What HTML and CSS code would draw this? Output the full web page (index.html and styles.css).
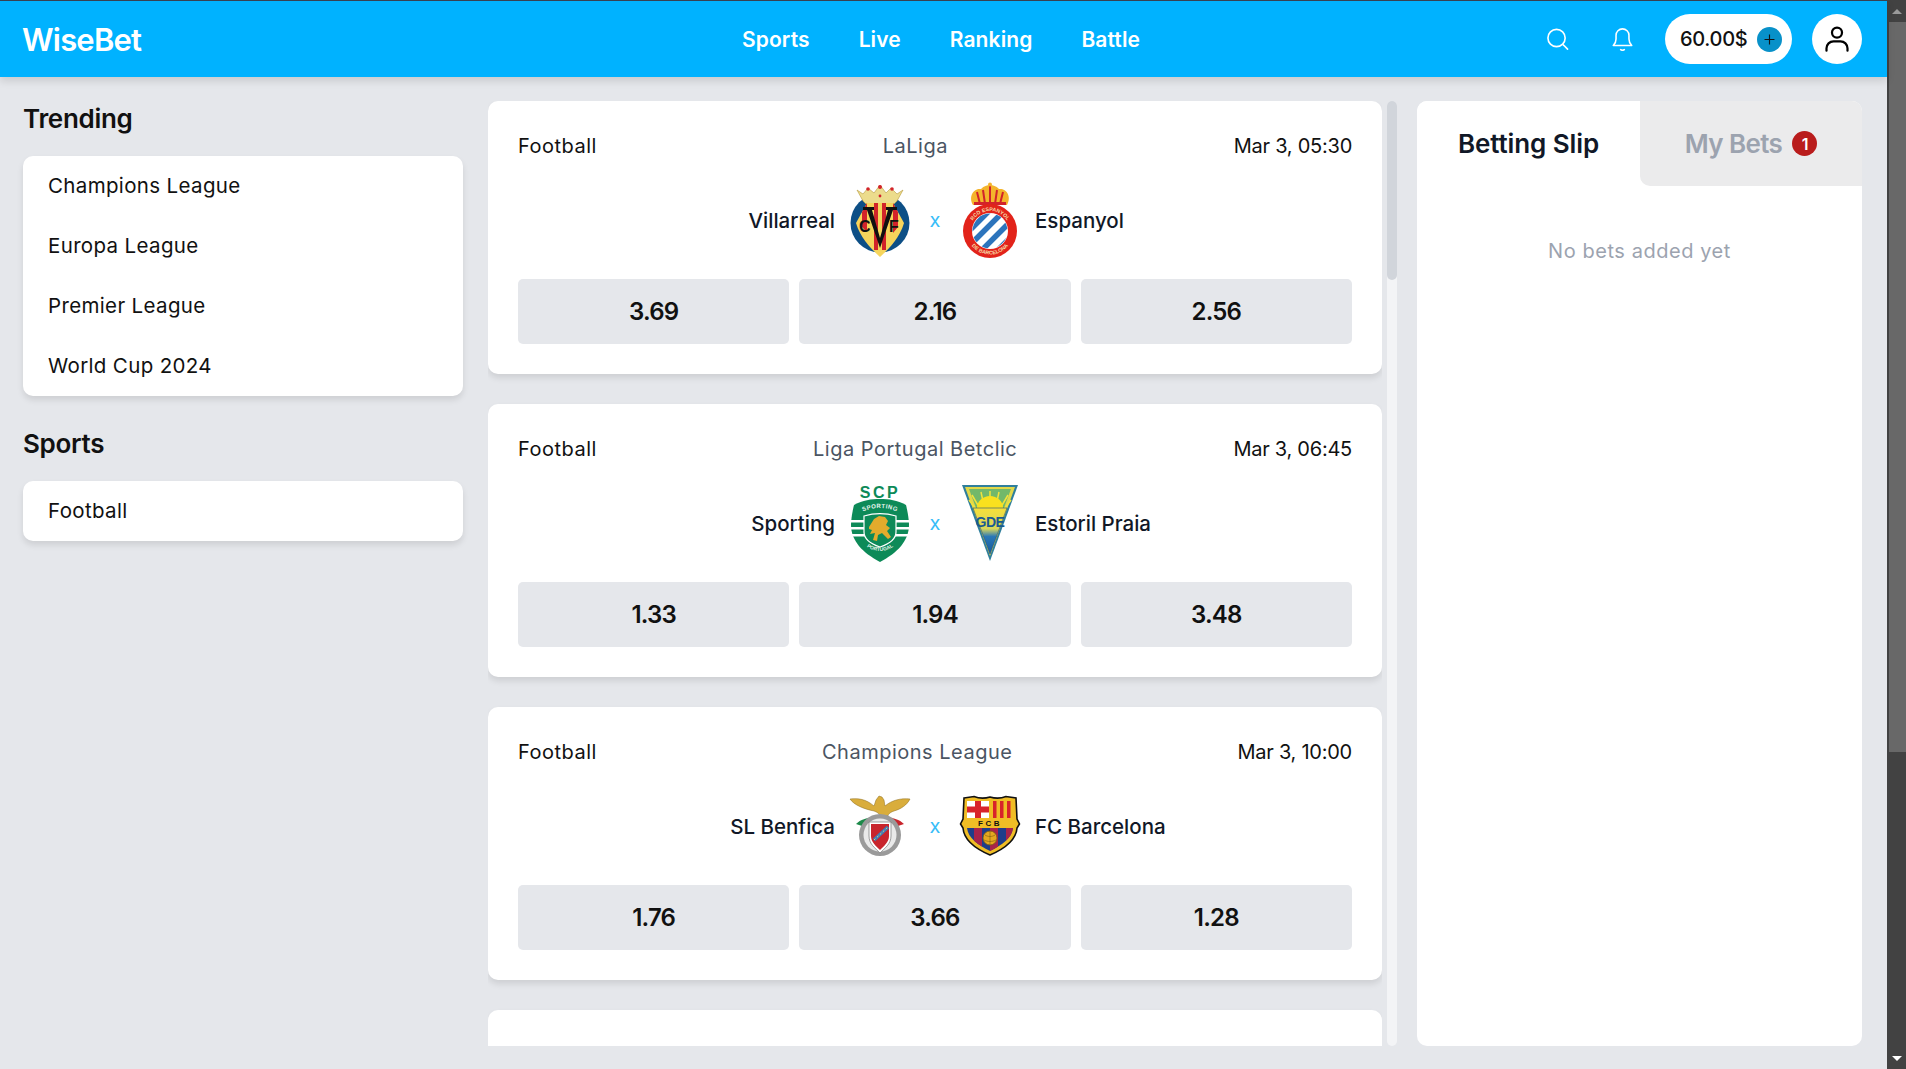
FILE: index.html
```html
<!DOCTYPE html>
<html lang="en">
<head>
    <meta charset="UTF-8">
    <meta name="viewport" content="width=device-width, initial-scale=1.0">
    <title>WiseBet</title>
    <link rel="stylesheet" href="styles.css">
</head>
<body>
    <div class="page">
        <header class="topbar">
            <div class="logo">WiseBet</div>
            <nav class="nav">
                <a href="#">Sports</a>
                <a href="#">Live</a>
                <a href="#">Ranking</a>
                <a href="#">Battle</a>
            </nav>
            <div class="actions">
                <svg class="icon search-icon" viewBox="0 0 24 24" fill="none" stroke="#fff" stroke-width="1.7" stroke-linecap="round"><circle cx="11" cy="11" r="9"/><path d="M18 18l4.500 4.500"/></svg>
                <svg class="icon bell-icon" viewBox="0 0 24 26" fill="none" stroke="#fff" stroke-width="1.7" stroke-linecap="round" stroke-linejoin="round"><path d="M2 20c2-2 3-4 3-7V9a7 7 0 0 1 14 0v4c0 3 1 5 3 7z"/><path d="M10 24.500c1 .7 3 .7 4 0"/></svg>
                <div class="balance">
                    <span>60.00$</span>
                    <span class="plus"><svg viewBox="0 0 24 24" fill="none" stroke="#111" stroke-width="1.600"><path d="M12 5v14M5 12h14"/></svg></span>
                </div>
                <div class="avatar">
                    <svg viewBox="0 0 24 24" fill="none" stroke="#000" stroke-width="1.900" stroke-linecap="round"><circle cx="12" cy="6.500" r="4.300"/><path d="M3 22v-2a6 6 0 0 1 6-6h6a6 6 0 0 1 6 6v2"/></svg>
                </div>
            </div>
        </header>

        <div class="content">
            <aside class="sidebar">
                <h2>Trending</h2>
                <ul class="menu">
                    <li>Champions League</li>
                    <li>Europa League</li>
                    <li>Premier League</li>
                    <li>World Cup 2024</li>
                </ul>
                <h2>Sports</h2>
                <ul class="menu">
                    <li>Football</li>
                </ul>
            </aside>

            <main class="matches">
                <div class="match-list">
                    <section class="match">
                        <div class="match-head">
                            <span>Football</span>
                            <span class="league">LaLiga</span>
                            <span class="date">Mar 3, 05:30</span>
                        </div>
                        <div class="teams">
                            <div class="team home">
                                <span>Villarreal</span>
                                <svg class="crest" viewBox="0 0 60 76">
                                    <circle cx="30" cy="41" r="29.500" fill="#0d4f86"/>
                                    <path d="M7 8l6 4 5-6 6 5 6-8 6 8 5-5 6 6 6-4-6 11-3 3H16l-3-3z" fill="#ecdc8c" stroke="#b79a3d" stroke-width=".6"/>
                                    <circle cx="18" cy="7" r="1.800" fill="#d2232a"/><circle cx="30" cy="5" r="2" fill="#d2232a"/><circle cx="42" cy="7" r="1.800" fill="#d2232a"/><circle cx="30" cy="14" r="1.400" fill="#d2232a"/>
                                    <clipPath id="vil-clip"><path d="M17 21h26l11 20c-4 14-14 25-24 34C20 66 10 55 6 41z"/></clipPath>
                                    <path d="M17 21h26l11 20c-4 14-14 25-24 34C20 66 10 55 6 41z" fill="#f6d55c"/>
                                    <g clip-path="url(#vil-clip)" fill="#d2232a">
                                        <path d="M12 20h5v30l-5-5zM24 20h4v48h-4zM32 20h4v48h-4zM43 20h5v25l-5 6z"/>
                                    </g>
                                    <path d="M13 25h11v3h-2l8 28 8-28h-2v-3h11v3h-4L30 66 17 28h-4z" fill="#111"/>
                                    <text x="9" y="50" class="crest-text" font-size="16" fill="#111">C</text>
                                    <text x="39" y="50" class="crest-text" font-size="16" fill="#111">F</text>
                                </svg>
                            </div>
                            <div class="versus">x</div>
                            <div class="team">
                                <svg class="crest" viewBox="0 0 60 76">
                                    <path d="M13 23C8 14 14 6 21 7c3-3 6-4 9-4s6 1 9 4c7-1 13 7 8 16z" fill="#f4b42c"/>
                                    <path d="M20 22l-3-12M30 22V4M40 22l3-12M25 22l-2-14M35 22l2-14" stroke="#d2232a" stroke-width="2"/>
                                    <circle cx="30" cy="2.500" r="2" fill="#f4b42c"/>
                                    <rect x="14" y="20" width="32" height="3" fill="#d2232a"/>
                                    <circle cx="30" cy="49" r="27" fill="#e2231a"/>
                                    <path id="esp-top" d="M10 49a20 20 0 0 1 40 0" fill="none"/>
                                    <path id="esp-bottom" d="M6.500 49a23.500 23.500 0 0 0 47 0" fill="none"/>
                                    <text class="crest-text" font-size="5.200" fill="#f8dca8"><textPath href="#esp-top" startOffset="50%" text-anchor="middle">RCD ESPANYOL</textPath></text>
                                    <text class="crest-text" font-size="5.200" fill="#f8dca8"><textPath href="#esp-bottom" startOffset="50%" text-anchor="middle">DE BARCELONA</textPath></text>
                                    <circle cx="30" cy="49" r="18" fill="#fff"/>
                                    <clipPath id="esp-clip"><circle cx="30" cy="49" r="17.500"/></clipPath>
                                    <g clip-path="url(#esp-clip)" stroke="#2c74bc" stroke-width="5.500">
                                        <path d="M2 56l28-28M9 64l35-35M18 72l35-35M30 76l30-30"/>
                                    </g>
                                </svg>
                                <span>Espanyol</span>
                            </div>
                        </div>
                        <div class="odds">
                            <button>3.69</button>
                            <button>2.16</button>
                            <button>2.56</button>
                        </div>
                    </section>

                    <section class="match">
                        <div class="match-head">
                            <span>Football</span>
                            <span class="league">Liga Portugal Betclic</span>
                            <span class="date">Mar 3, 06:45</span>
                        </div>
                        <div class="teams">
                            <div class="team home">
                                <span>Sporting</span>
                                <svg class="crest tall" viewBox="0 0 60 78">
                                    <text x="30" y="14" text-anchor="middle" class="crest-text" font-size="16" letter-spacing="2.500" fill="#0d8a58">SCP</text>
                                    <path d="M4 21c9-5 17-6 26-6s17 1 26 6c2 8 3 16 3 20 0 16-12 28-29 37C13 69 1 57 1 41c0-4 1-12 3-20z" fill="#0d8a58"/>
                                    <path d="M1 36h58v2.500H1zM1 43h58v2.500H1zM1 50h58v2.500H1z" fill="#fff"/>
                                    <path id="scp-top" d="M9 30c12-8 30-8 42 0" fill="none"/>
                                    <path id="scp-bottom" d="M15 61c8 8 22 8 30 0" fill="none"/>
                                    <text class="crest-text" font-size="6" letter-spacing=".4" fill="#e8f5ee"><textPath href="#scp-top" startOffset="50%" text-anchor="middle">SPORTING</textPath></text>
                                    <text class="crest-text" font-size="5" fill="#e8f5ee"><textPath href="#scp-bottom" startOffset="50%" text-anchor="middle">PORTUGAL</textPath></text>
                                    <path d="M14 32c10-3 22-3 32 0v16c0 7-7 12-16 15-9-3-16-8-16-15z" fill="#0d8a58" stroke="#fff" stroke-width="1.200"/>
                                    <path d="M19 43l5-8 5-3 6 1 3 4-2 4 4 3-3 3 4 6-3 2-6-6-4 2-1 6-4-1 2-7-5 1 2-4-3-1z" fill="#e3ab2c"/>
                                </svg>
                            </div>
                            <div class="versus">x</div>
                            <div class="team">
                                <svg class="crest tall" viewBox="0 0 60 78">
                                    <defs>
                                        <linearGradient id="est-fade" x1="0" y1="0" x2="0" y2="1">
                                            <stop offset="0" stop-color="#f6e03a"/>
                                            <stop offset=".45" stop-color="#d8d65a"/>
                                            <stop offset=".62" stop-color="#2a78b8"/>
                                            <stop offset="1" stop-color="#165a9c"/>
                                        </linearGradient>
                                    </defs>
                                    <path d="M2 1h56L30 77z" fill="#2f7f9c"/>
                                    <path d="M5 3h50L30 72z" fill="#e2d84a"/>
                                    <path d="M9 5h42L30 62z" fill="#72b86a"/>
                                    <path d="M30 22V7M24 22l-3-14M36 22l3-14M19 23l-7-12M41 23l7-12M15 24l-6-8M45 24l6-8" stroke="#f2e23c" stroke-width="1.500"/>
                                    <path d="M17 24a13 12 0 0 1 26 0z" fill="#f9e11e"/>
                                    <path d="M13 24h34L30 70z" fill="url(#est-fade)" stroke="#234f7a" stroke-width=".6"/>
                                    <text x="30" y="43" text-anchor="middle" class="crest-text" font-size="14" letter-spacing="-.5" fill="#1a5a90">GDE</text>
                                </svg>
                                <span>Estoril Praia</span>
                            </div>
                        </div>
                        <div class="odds">
                            <button>1.33</button>
                            <button>1.94</button>
                            <button>3.48</button>
                        </div>
                    </section>

                    <section class="match">
                        <div class="match-head">
                            <span>Football</span>
                            <span class="league">Champions League</span>
                            <span class="date">Mar 3, 10:00</span>
                        </div>
                        <div class="teams">
                            <div class="team home">
                                <span>SL Benfica</span>
                                <svg class="crest" viewBox="0 0 60 62">
                                    <path d="M0 4c8-1 16 0 24 7l2-6 3-4 3 1 2 3 1 6c7-6 16-8 25-7-3 6-9 10-16 12-3 1-6 3-6 5h-8c0-2-3-4-6-5C14 14 4 10 0 4z" fill="#d9ad3c" stroke="#8a6d20" stroke-width=".5"/>
                                    <path d="M6 29c6-6 14-7 22-6v4c-8-1-12 0-16 4z" fill="#1d8a4a"/>
                                    <path d="M54 29c-6-6-14-7-22-6v4c8-1 12 0 16 4z" fill="#c8242c"/>
                                    <circle cx="30" cy="40" r="21" fill="#9a9a9a"/>
                                    <circle cx="30" cy="40" r="16.500" fill="#e9e9e9"/>
                                    <path d="M19 27h22v14c0 8-6 12-11 17-5-5-11-9-11-17z" fill="#fff" stroke="#777" stroke-width=".7"/>
                                    <path d="M21 29h18v12c0 6-5 10-9 14-4-4-9-8-9-14z" fill="#c8242c"/>
                                    <path d="M24 45l14-13" stroke="#3e7cb8" stroke-width="3.500"/>
                                    <path d="M24 45l14-13" stroke="#e8cf6a" stroke-width="1" stroke-dasharray="2 2"/>
                                </svg>
                            </div>
                            <div class="versus">x</div>
                            <div class="team">
                                <svg class="crest" viewBox="0 0 60 62">
                                    <clipPath id="fcb-clip"><path d="M7 33h46c-1 10-11 17-23 23C18 50 8 43 7 33z"/></clipPath>
                                    <path d="M4 3l10-1.500c5 2 11 2 16 .5 5 1.500 11 1.500 16-.5L56 3l1 21 2.500 5-2.500 4C56 46 44 54 30 60 16 54 4 46 3 33L.500 29 3 24z" fill="#f0bd25" stroke="#111" stroke-width="1.600"/>
                                    <rect x="7" y="6" width="22" height="17" fill="#fff"/>
                                    <path d="M15 6h6v17h-6zM7 11.500h22v6H7z" fill="#d8232a"/>
                                    <path d="M33 6h3.500v17H33zM40 6h3.500v17H40zM47 6h3.500v17H47z" fill="#d8232a"/>
                                    <text x="30" y="31" text-anchor="middle" class="crest-text" font-size="8" letter-spacing="2.500" fill="#111">FCB</text>
                                    <g clip-path="url(#fcb-clip)">
                                        <rect x="5" y="33" width="50" height="25" fill="#1f3d8a"/>
                                        <path d="M14 33h8v25h-8zM30 33h8v25h-8zM46 33h8v25h-8z" fill="#a8234a"/>
                                    </g>
                                    <circle cx="30" cy="43" r="7" fill="#e5a820" stroke="#7a5a10" stroke-width=".8"/>
                                    <path d="M25 40c3 2 7 2 10 0M24 45c4 2 8 2 12 0M30 36v14" fill="none" stroke="#7a5a10" stroke-width=".6"/>
                                </svg>
                                <span>FC Barcelona</span>
                            </div>
                        </div>
                        <div class="odds">
                            <button>1.76</button>
                            <button>3.66</button>
                            <button>1.28</button>
                        </div>
                    </section>

                    <section class="match"></section>
                </div>
                <div class="inner-scroll"><div class="inner-thumb"></div></div>
            </main>

            <aside class="slip">
                <div class="tabs">
                    <div class="tab active">Betting Slip</div>
                    <div class="tab">My Bets <span class="badge">1</span></div>
                </div>
                <p class="empty">No bets added yet</p>
            </aside>
        </div>
    </div>

    <div class="page-scroll">
        <div class="arrow-box"><span class="arrow up"></span></div>
        <div class="page-thumb"></div>
        <div class="page-track"></div>
        <div class="arrow-box"><span class="arrow down"></span></div>
    </div>
</body>
</html>
```

FILE: styles.css
```css
* {
    box-sizing: border-box;
}
html, body {
    height: 100%;
}
body {
    display: flex;
    margin: 0;
    overflow: hidden;
    font-family: Inter, "Open Sans", sans-serif;
    background-color: #e5e7eb;
    color: #111;
}
.page {
    flex: 1;
    min-width: 0;
    display: flex;
    flex-direction: column;
}
.topbar {
    position: relative;
    z-index: 2;
    display: flex;
    flex: none;
    align-items: center;
    height: 77px;
    padding: 0 25px 0 22px;
    border-top: 1px solid #374151;
    background-color: #00b2ff;
    box-shadow: 0 4px 8px rgba(0, 0, 0, 0.12);
}
.logo {
    width: 720px;
    color: #fff;
    font-size: 31px;
    font-weight: 600;
    letter-spacing: -0.8px;
}
.nav {
    display: flex;
    gap: 49px;
}
.nav a {
    color: #fff;
    font-size: 21px;
    font-weight: 600;
    letter-spacing: 0.1px;
    text-decoration: none;
}
.actions {
    display: flex;
    align-items: center;
    margin-left: auto;
}
.icon {
    width: 23px;
    height: 24px;
}
.search-icon {
    margin-right: 42px;
}
.bell-icon {
    margin-right: 31px;
}
.balance {
    display: flex;
    align-items: center;
    justify-content: space-between;
    width: 127px;
    height: 50px;
    padding: 0 10px 0 15px;
    border-radius: 25px;
    background-color: #fff;
    font-size: 20px;
    font-weight: 500;
    letter-spacing: -0.3px;
}
.plus {
    display: flex;
    width: 25px;
    height: 25px;
    padding: 4px;
    border-radius: 50%;
    background-color: #0891c9;
}
.avatar {
    width: 50px;
    height: 50px;
    margin-left: 20px;
    padding: 11px;
    border-radius: 50%;
    background-color: #fff;
}
.content {
    display: flex;
    flex: 1;
    min-height: 0;
    padding: 24px 25px 23px 23px;
}
.sidebar {
    flex: none;
    width: 440px;
    margin-right: 25px;
}
.sidebar h2 {
    margin: 0 0 19px;
    font-size: 26px;
    line-height: 36px;
    font-weight: 600;
    letter-spacing: -0.3px;
}
.menu {
    margin: 0 0 30px;
    padding: 0;
    list-style: none;
    border-radius: 10px;
    background-color: #fff;
    box-shadow: 0 4px 6px rgba(0, 0, 0, 0.1);
}
.menu li {
    height: 60px;
    padding: 0 25px;
    font-size: 20.500px;
    line-height: 60px;
    letter-spacing: 0.35px;
}
.matches {
    display: flex;
    flex: none;
    width: 909px;
    margin-right: 20px;
}
.match-list {
    flex: 1;
    display: flex;
    flex-direction: column;
    gap: 30px;
    overflow: hidden;
}
.match {
    flex: none;
    height: 273px;
    padding: 30px;
    border-radius: 10px;
    background-color: #fff;
    box-shadow: 0 4px 6px rgba(0, 0, 0, 0.1);
}
.match-head {
    display: flex;
    justify-content: space-between;
    font-size: 20px;
    line-height: 30px;
    letter-spacing: 0.5px;
}
.league {
    color: #4b5563;
}
.date {
    letter-spacing: -0.25px;
}
.teams {
    display: grid;
    grid-template-columns: 1fr 50px 1fr;
    height: 80px;
    margin-top: 19px;
}
.team {
    display: flex;
    align-items: center;
    gap: 15px;
    font-size: 20.500px;
    font-weight: 500;
    color: #111827;
}
.team.home {
    justify-content: flex-end;
}
.crest {
    flex: none;
    width: 60px;
    height: 76px;
    overflow: visible;
}
.crest.tall {
    height: 78px;
}
.crest-text {
    font-family: "Liberation Sans", sans-serif;
    font-weight: 700;
}
.versus {
    align-self: center;
    text-align: center;
    color: #38bdf8;
    font-size: 20px;
}
.odds {
    display: grid;
    grid-template-columns: repeat(3, 1fr);
    gap: 10px;
    margin-top: 19px;
}
.odds button {
    height: 65px;
    border: 0;
    border-radius: 5px;
    background-color: #e5e7eb;
    color: #111;
    font-family: inherit;
    font-size: 24px;
    font-weight: 600;
    letter-spacing: -0.8px;
}
.inner-scroll {
    flex: none;
    width: 10px;
    margin-left: 5px;
    border-radius: 5px;
    background-color: #f3f4f6;
}
.inner-thumb {
    height: 179px;
    border-radius: 5px;
    background-color: #d1d5db;
}
.slip {
    flex: 1;
    border-radius: 10px;
    background-color: #fff;
}
.tabs {
    display: flex;
    height: 85px;
}
.tab {
    display: flex;
    align-items: center;
    justify-content: center;
    gap: 10px;
    width: 222px;
    border-radius: 0 10px 0 10px;
    background-color: #ebebec;
    color: #9ca3af;
    font-size: 26px;
    font-weight: 600;
    letter-spacing: -0.6px;
}
.tab.active {
    width: 223px;
    border-radius: 10px 0 0 0;
    background-color: #fff;
    color: #111827;
    letter-spacing: -0.1px;
}
.badge {
    display: flex;
    align-items: center;
    justify-content: center;
    width: 25px;
    height: 25px;
    border-radius: 50%;
    background-color: #b91c1c;
    color: #fff;
    font-size: 16px;
}
.empty {
    margin: 50px 0 0;
    text-align: center;
    color: #9ca3af;
    font-size: 20px;
    line-height: 30px;
    letter-spacing: 0.55px;
}
.page-scroll {
    display: flex;
    flex: none;
    flex-direction: column;
    width: 19px;
    background-color: #424242;
}
.arrow-box {
    display: flex;
    flex: none;
    align-items: center;
    justify-content: center;
    height: 22px;
}
.arrow {
    width: 0;
    height: 0;
    border-left: 5px solid transparent;
    border-right: 5px solid transparent;
}
.arrow.up {
    border-bottom: 5px solid #9a9a9a;
}
.arrow.down {
    border-top: 5px solid #fff;
}
.page-thumb {
    flex: none;
    height: 730px;
    margin-left: 2px;
    background-color: #686868;
}
.page-track {
    flex: 1;
}
```
